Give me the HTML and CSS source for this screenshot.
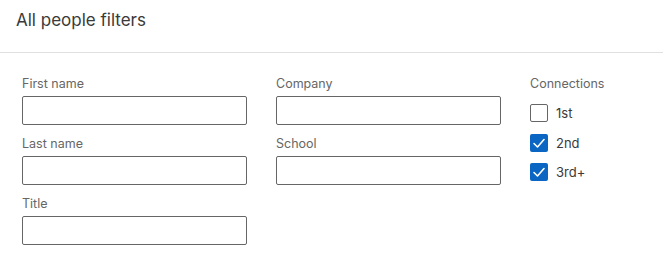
FILE: index.html
```html
<!DOCTYPE html>
<html>
<head>
<meta charset="utf-8">
<link rel="stylesheet" href="styles.css">
</head>
<body>
<div class="modal">
  <header class="modal-header">
    <h2 class="modal-title">All people filters</h2>
  </header>
  <div class="filters">
    <div class="col">
      <div class="field">
        <label class="field-label">First name</label>
        <input class="field-input" type="text">
      </div>
      <div class="field">
        <label class="field-label">Last name</label>
        <input class="field-input" type="text">
      </div>
      <div class="field">
        <label class="field-label">Title</label>
        <input class="field-input" type="text">
      </div>
    </div>
    <div class="col">
      <div class="field">
        <label class="field-label">Company</label>
        <input class="field-input" type="text">
      </div>
      <div class="field">
        <label class="field-label">School</label>
        <input class="field-input" type="text">
      </div>
    </div>
    <div class="col">
      <div class="field-label">Connections</div>
      <ul class="checks">
        <li class="check-row">
          <span class="box"></span>
          <span class="check-text">1st</span>
        </li>
        <li class="check-row">
          <span class="box checked"><svg viewBox="0 0 18 18" width="18" height="18"><polyline points="4,9.5 7.5,13 14,5.5" fill="none" stroke="#fff" stroke-width="1.6" stroke-linecap="round" stroke-linejoin="round"/></svg></span>
          <span class="check-text">2nd</span>
        </li>
        <li class="check-row">
          <span class="box checked"><svg viewBox="0 0 18 18" width="18" height="18"><polyline points="4,9.5 7.5,13 14,5.5" fill="none" stroke="#fff" stroke-width="1.6" stroke-linecap="round" stroke-linejoin="round"/></svg></span>
          <span class="check-text">3rd+</span>
        </li>
      </ul>
    </div>
  </div>
</div>
</body>
</html>
```
FILE: styles.css
```css
* { box-sizing: border-box; }
html, body {
  margin: 0;
  background: #fff;
  font-family: Inter, "Noto Sans", sans-serif;
}
.modal-header {
  height: 53px;
  border-bottom: 1px solid #e0e0e0;
  padding: 9px 16px 0;
}
.modal-title {
  margin: 0;
  font-size: 17px;
  font-weight: 400;
  line-height: 22px;
  color: #3a3a3a;
}
.filters {
  display: grid;
  grid-template-columns: 225px 225px 120px;
  column-gap: 29px;
  padding: 23px 22px 0;
}
.field {
  display: flex;
  flex-direction: column;
  gap: 4px;
  margin-bottom: 11px;
}
.field-label {
  font-size: 12.5px;
  line-height: 16px;
  color: #666;
}
.field-input {
  height: 29px;
  width: 225px;
  border: 1px solid #666;
  border-radius: 2px;
  margin: 0;
  padding: 0 8px;
  background: #fff;
}
.checks {
  list-style: none;
  margin: 12px 0 0;
  padding: 0;
  display: flex;
  flex-direction: column;
  gap: 11.5px;
}
.check-row {
  display: flex;
  align-items: center;
  gap: 8px;
  height: 18px;
}
.box {
  width: 18px;
  height: 18px;
  border: 1px solid #666;
  border-radius: 2px;
  display: block;
}
.box.checked {
  border: none;
  background: #0a66c2;
}
.box svg { display: block; }
.check-text {
  font-size: 13px;
  color: #3a3a3a;
}
```
